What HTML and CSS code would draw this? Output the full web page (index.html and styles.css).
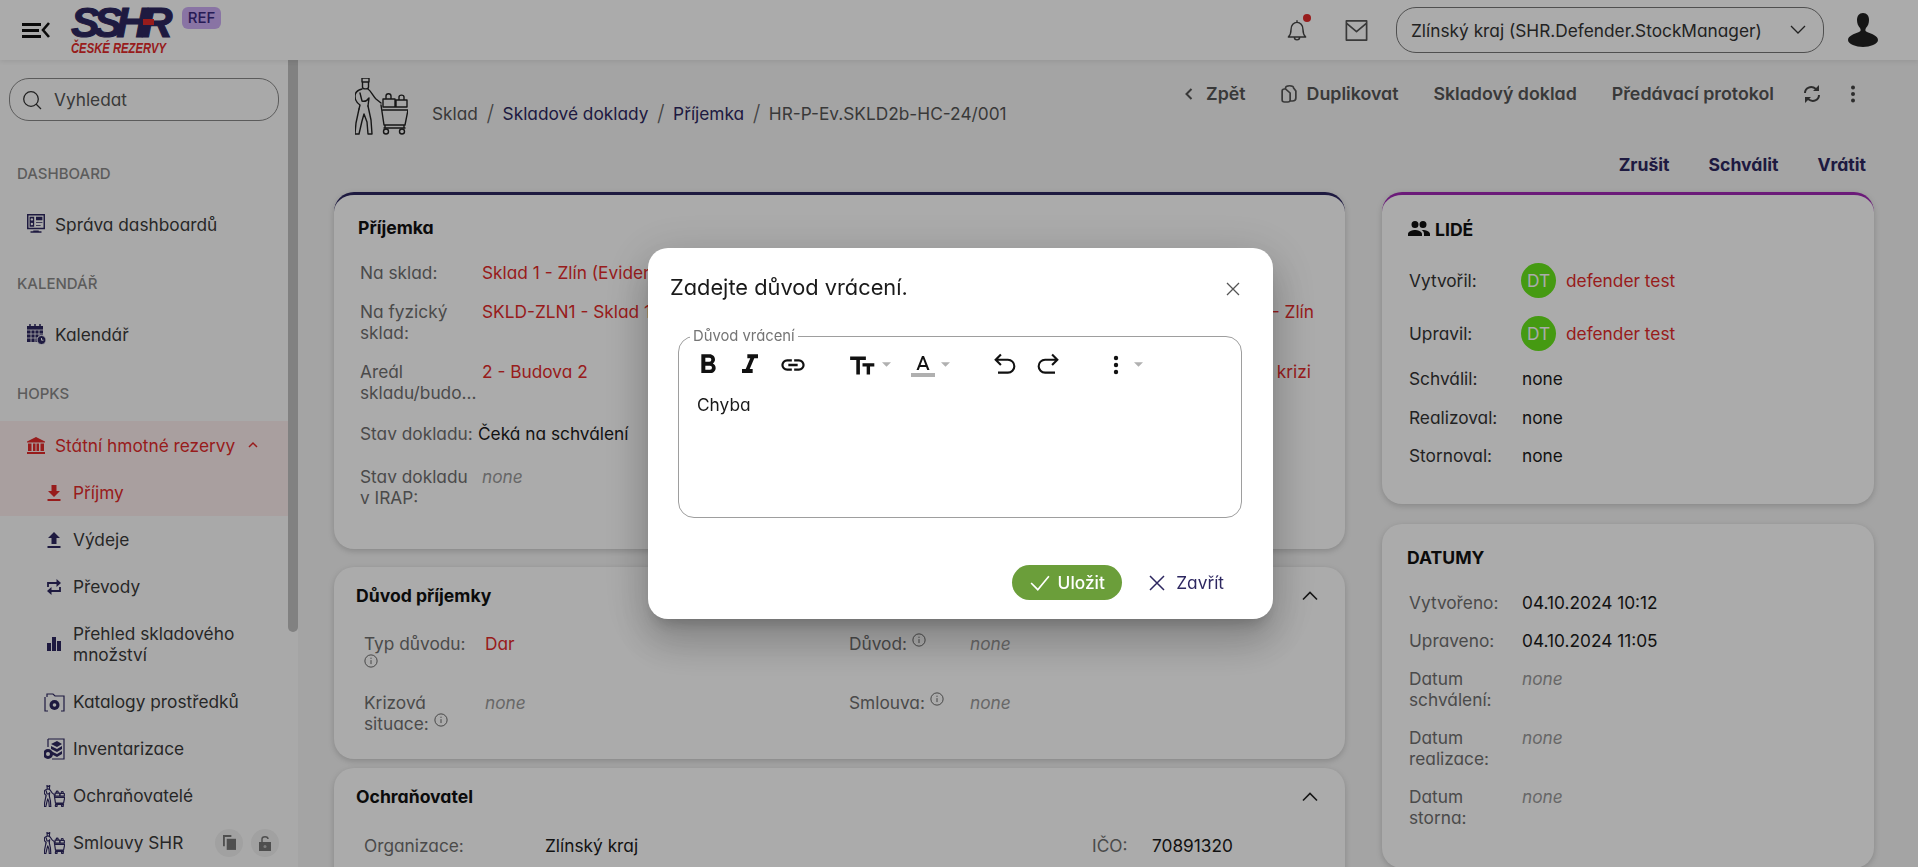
FILE: index.html
```html
<!DOCTYPE html>
<html lang="cs">
<head>
    <meta charset="UTF-8"/>
    <meta name="viewport" content="width=device-width, initial-scale=1.0"/>
    <title>Příjemka</title>
    <link rel="stylesheet" href="styles.css">
</head>
<body>
<svg class="defs" width="0" height="0">
    <symbol id="ic-info" viewBox="0 0 16 16"><circle cx="8" cy="8" r="7" fill="none" stroke="currentColor"/><path d="M8 7v4.5M8 4.2v1.4" stroke="currentColor" fill="none"/></symbol>
    <symbol id="ic-up" viewBox="0 0 24 24"><path d="M5 15.5l7-7 7 7" fill="none" stroke="currentColor" stroke-width="1.6"/></symbol>
    <symbol id="ic-caret" viewBox="0 0 10 6"><path d="M0 0h10L5 5z" fill="currentColor"/></symbol>
    <symbol id="ic-worker" viewBox="0 0 53 57">
        <g fill="none" stroke="currentColor" stroke-linejoin="round" stroke-linecap="round">
            <path d="M7 0h7v4H7zM7.500 4v5c0 2.500 6 2.500 6 0V4"/>
            <path d="M7 11c-4 1-7 3-7 7 0 4 2 7 5 9l-1 4M13 11c3 2 5 7 8 10l5 4M5 15l2 8c3 1 5 0 7-3M14 20l-1 8"/>
            <path d="M4 31L1 45 0 56h4l3-13 2-7 3 8 1 12h4L16 42 13 28"/>
            <path d="M26 27l3 20h21l3-15H28M29 50h21M30 47v3M49 47v3"/>
            <circle cx="31" cy="53.500" r="2.500"/><circle cx="47" cy="53.500" r="2.500"/>
            <path d="M28 21h12v8H28zM31 21v-3c0-3 5-3 5 0v3M41 22h11v7H41zM44 22v-3c0-2.500 5-2.500 5 0v3"/>
        </g>
    </symbol>
</svg>

<header class="topbar">
    <svg class="menu-toggle" viewBox="0 0 28 18"><path d="M0 2h19v3H0zM0 8h17v3H0zM0 14h19v3H0z" fill="#111"/><path d="M27 2l-6 7 6 7" fill="none" stroke="#111" stroke-width="2.6"/></svg>
    <div class="logo">
        <span class="logo-name">SSHR<i class="logo-dash"></i></span>
        <span class="logo-sub">ČESKÉ REZERVY</span>
    </div>
    <span class="env-badge">REF</span>

    <div class="topbar-right">
        <span class="bell">
            <svg viewBox="0 0 24 24" width="26" height="26"><path d="M4 18.500c2-2 2.500-3 2.500-7 0-4 2.500-6.500 5.500-6.500s5.500 2.500 5.500 6.500c0 4 .5 5 2.500 7zM9.500 18.500c0 3.500 5 3.500 5 0M12 5V3" fill="none" stroke="#444" stroke-width="1.300" stroke-linejoin="round"/></svg>
            <i class="bell-dot"></i>
        </span>
        <svg class="mail" viewBox="0 0 24 24" width="27" height="27"><path d="M3 3.500h18v17H3zM3 5.500l9 7.500 9-7.500" fill="none" stroke="#555" stroke-width="1.500" stroke-linejoin="round"/></svg>
        <div class="role-select">
            <span>Zlínský kraj (SHR.Defender.StockManager)</span>
            <svg viewBox="0 0 16 10" width="16" height="10"><path d="M1 1l7 7 7-7" fill="none" stroke="#333" stroke-width="1.300"/></svg>
        </div>
        <svg class="avatar-icon" viewBox="0 0 30 34" width="30" height="34"><path d="M15 0c4 0 6 3 6 7 0 3-1 6-3 8-1 2-1 3 1 4 5 2 11 4 11 8 0 4-8 7-15 7S0 31 0 27c0-4 6-6 11-8 2-1 2-2 1-4-2-2-3-5-3-8 0-4 2-7 6-7z" fill="#222"/></svg>
    </div>
</header>

<div class="layout">
    <aside class="sidebar">
        <div class="sidebar-inner">
            <div class="search">
                <svg viewBox="0 0 20 20" width="20" height="20"><circle cx="9" cy="9" r="7.300" fill="none" stroke="#333" stroke-width="1.300"/><path d="M14 14l5 5" stroke="#333" stroke-width="1.300"/></svg>
                <span>Vyhledat</span>
            </div>

            <div class="nav-title">DASHBOARD</div>
            <div class="nav-item">
                <svg class="nav-icon" viewBox="0 0 20 24"><path d="M1 2h18v15H1z" fill="none" stroke="currentColor" stroke-width="1.600"/><path d="M3 4h5v11H3zM10 4h7v4h-7zM10 10h7v1h-7zM10 13h5v1h-5zM7 19h6v1h3v1.500H4V20h3z" fill="currentColor"/><circle cx="5.500" cy="7" r="1.300" fill="#fff"/><circle cx="5.500" cy="12" r="1.300" fill="#fff"/></svg>
                <span>Správa dashboardů</span>
            </div>

            <div class="nav-title">KALENDÁŘ</div>
            <div class="nav-item">
                <svg class="nav-icon" viewBox="0 0 20 22"><path d="M1 3h16v16H1z" fill="currentColor"/><path d="M1 7h16M5 7v12M9 7v12M13 7v12M1 11h16M1 15h16" stroke="#fff" stroke-width=".8"/><path d="M4 1v3M9 1v3M14 1v3" stroke="currentColor" stroke-width="1.500"/><circle cx="15.500" cy="17" r="4.500" fill="currentColor" stroke="#fff"/><path d="M15.500 15v2.200h2" stroke="#fff" fill="none"/></svg>
                <span>Kalendář</span>
            </div>

            <div class="nav-title">HOPKS</div>
            <div class="nav-active">
                <div class="nav-item is-active">
                    <svg class="nav-icon" viewBox="0 0 20 18"><path d="M10 1l9 4.500v1H1v-1zM1 16h18v2H1z" fill="currentColor"/><path d="M2 7.500h3.500V15H2zM7 7.500h2.500V15H7zM10.500 7.500H13V15h-2.500zM14.500 7.500H18V15h-3.500z" fill="currentColor"/></svg>
                    <span>Státní hmotné rezervy</span>
                    <svg class="nav-chevron" viewBox="0 0 12 8" width="12" height="8"><path d="M2 6l4-4 4 4" fill="none" stroke="currentColor" stroke-width="1.500"/></svg>
                </div>
                <div class="nav-sub is-active">
                    <svg class="sub-icon" viewBox="0 0 14 16"><path d="M4.500 0h5v6H13L7 12 1 6h3.500zM.5 14h13v2H.5z" fill="currentColor"/></svg>
                    <span>Příjmy</span>
                </div>
            </div>
            <div class="nav-sub">
                <svg class="sub-icon" viewBox="0 0 14 16"><path d="M4.500 12h5V6H13L7 0 1 6h3.500zM.5 14h13v2H.5z" fill="currentColor"/></svg>
                <span>Výdeje</span>
            </div>
            <div class="nav-sub">
                <svg class="sub-icon" viewBox="0 0 14 16"><path d="M1 8V4h9M1 8v-.5M13 8v4H4" fill="none" stroke="currentColor" stroke-width="1.800"/><path d="M9.500 0L14 4 9.500 8zM4.500 8L0 12l4.500 4z" fill="currentColor"/></svg>
                <span>Převody</span>
            </div>
            <div class="nav-sub">
                <svg class="sub-icon" viewBox="0 0 14 16"><path d="M0 7h4v8H0zM5 1h4v14H5zM10 5h4v10h-4z" fill="currentColor"/></svg>
                <span>Přehled skladového množství</span>
            </div>
            <div class="nav-sub">
                <svg class="sub-icon wide" viewBox="0 0 21 20"><path d="M3 5V2h6l2 2h9v3M1 5v14h3M20 7v12h-3" fill="none" stroke="currentColor" stroke-width="1.200"/><circle cx="10.500" cy="13" r="5" fill="currentColor"/><circle cx="10.500" cy="13" r="1.800" fill="#fff"/></svg>
                <span>Katalogy prostředků</span>
            </div>
            <div class="nav-sub">
                <svg class="sub-icon wide" viewBox="0 0 21 22"><path d="M4 1h16v20H8M4 1v8" fill="none" stroke="currentColor" stroke-width="1.200"/><path d="M7 6l6-3 5 3-5 3zM7 8v3l6 3 5-3V8l-5 3zM7 13v3l6 3 5-3v-3l-5 3z" fill="currentColor"/><circle cx="4" cy="16" r="3.500" fill="none" stroke="currentColor"/></svg>
                <span>Inventarizace</span>
            </div>
            <div class="nav-sub">
                <svg class="sub-icon wide"><use href="#ic-worker"/></svg>
                <span>Ochraňovatelé</span>
            </div>
            <div class="nav-sub">
                <svg class="sub-icon wide"><use href="#ic-worker"/></svg>
                <span>Smlouvy SHR</span>
                <span class="sub-tools">
                    <span class="tool"><svg viewBox="0 0 14 16" width="13" height="15"><path d="M0 0h9v2H2v10H0z" fill="#777"/><path d="M4 4h10v12H4z" fill="#777"/></svg></span>
                    <span class="tool"><svg viewBox="0 0 12 16" width="12" height="16"><path d="M3 7V4c0-3 6-3 6 0" fill="none" stroke="#777" stroke-width="1.500"/><path d="M0 7h12v9H0z" fill="#777"/><circle cx="6" cy="11.500" r="1.500" fill="#bbb"/></svg></span>
                </span>
            </div>
        </div>
        <div class="sidebar-thumb"></div>
    </aside>

    <main class="main">
        <div class="page-top">
            <div class="crumbs">
                <svg class="crumb-icon"><use href="#ic-worker"/></svg>
                <span class="crumb muted">Sklad</span><span class="crumb-sep">/</span>
                <span class="crumb">Skladové doklady</span><span class="crumb-sep">/</span>
                <span class="crumb">Příjemka</span><span class="crumb-sep">/</span>
                <span class="crumb muted">HR-P-Ev.SKLD2b-HC-24/001</span>
            </div>
            <div class="actions">
                <span class="action back"><svg viewBox="0 0 8 12" width="8" height="12"><path d="M6.500 1L1.500 6l5 5" fill="none" stroke="currentColor" stroke-width="2"/></svg>Zpět</span>
                <span class="action dup"><svg viewBox="0 0 14 18" width="16" height="18" preserveAspectRatio="none"><path d="M4 4V3c0-3 7-3 7 0l2 3v7c0 2-1 3-3 3H8M4 4H3C1 4 1 5 1 6v9c0 2 1 2 2 2h3c2 0 2-1 2-2V8z" fill="none" stroke="currentColor" stroke-width="1.500"/></svg>Duplikovat</span>
                <span class="action">Skladový doklad</span>
                <span class="action action-last">Předávací protokol</span>
                <svg class="action-icon" viewBox="0 0 18 20" width="18" height="20"><path d="M2 9c0-5 6-8 11-4M16 11c0 5-6 8-11 4" fill="none" stroke="#444" stroke-width="2"/><path d="M16 1v6h-6zM2 19v-6h6z" fill="#444"/></svg>
                <svg class="action-icon" viewBox="0 0 4 18" width="4" height="18"><circle cx="2" cy="2.500" r="2" fill="#444"/><circle cx="2" cy="9" r="2" fill="#444"/><circle cx="2" cy="15.500" r="2" fill="#444"/></svg>
            </div>
        </div>
        <div class="state-actions">
            <span>Zrušit</span><span>Schválit</span><span>Vrátit</span>
        </div>

        <div class="columns">
            <div class="col-left">
                <section class="card card-navy card-receipt">
                    <h2>Příjemka</h2>
                    <div class="rows">
                        <div class="row"><span class="label">Na sklad:</span><span class="link">Sklad 1 - Zlín (Evidence)</span></div>
                        <div class="row"><span class="label">Na fyzický sklad:</span><span class="link">SKLD-ZLN1 - Sklad 1</span><span class="link">Sklad 1 - Zlín</span></div>
                        <div class="row"><span class="label">Areál skladu/budo...</span><span class="link">2 - Budova 2</span><span class="link inset">Použití v krizi</span></div>
                        <div class="row row-state"><span class="label">Stav dokladu:</span><span>Čeká na schválení</span></div>
                        <div class="row"><span class="label">Stav dokladu v&nbsp;IRAP:</span><span class="none">none</span></div>
                    </div>
                </section>

                <section class="card card-fold card-reason">
                    <div class="fold-head"><h2>Důvod příjemky</h2><svg width="24" height="24"><use href="#ic-up"/></svg></div>
                    <div class="pair-grid pair-reason">
                        <div class="pair"><span class="label">Typ důvodu: <svg class="info"><use href="#ic-info"/></svg></span><span class="link">Dar</span></div>
                        <div class="pair"><span class="label">Důvod: <svg class="info"><use href="#ic-info"/></svg></span><span class="none">none</span></div>
                        <div class="pair"><span class="label">Krizová situace: <svg class="info"><use href="#ic-info"/></svg></span><span class="none">none</span></div>
                        <div class="pair"><span class="label">Smlouva: <svg class="info"><use href="#ic-info"/></svg></span><span class="none">none</span></div>
                    </div>
                </section>

                <section class="card card-fold card-keeper">
                    <div class="fold-head"><h2>Ochraňovatel</h2><svg width="24" height="24"><use href="#ic-up"/></svg></div>
                    <div class="pair-grid pair-keeper">
                        <div class="pair"><span class="label">Organizace:</span><span>Zlínský kraj</span></div>
                        <div class="pair"><span class="label">IČO:</span><span>70891320</span></div>
                    </div>
                </section>
            </div>

            <div class="col-right">
                <section class="card card-purple card-people">
                    <h2 class="people-title"><svg viewBox="0 0 24 24" width="24" height="24"><path d="M16 13c-.4 0-.8 0-1.300.1 1.200.8 2.300 2 2.300 3.900v2h6v-2c0-2.700-4.700-4-7-4zM8 13c-2.300 0-7 1.300-7 4v2h14v-2c0-2.700-4.700-4-7-4zM8 11a3.500 3.500 0 1 0 0-7 3.500 3.500 0 0 0 0 7zM16 11a3.500 3.500 0 1 0 0-7 3.500 3.500 0 0 0 0 7z" fill="#111"/></svg>LIDÉ</h2>
                    <div class="side-rows">
                        <div class="side-row dark"><span class="label">Vytvořil:</span><span class="person"><i class="initials">DT</i><span class="link">defender test</span></span></div>
                        <div class="side-row dark"><span class="label">Upravil:</span><span class="person"><i class="initials">DT</i><span class="link">defender test</span></span></div>
                        <div class="side-row dark"><span class="label">Schválil:</span><span>none</span></div>
                        <div class="side-row dark"><span class="label">Realizoval:</span><span>none</span></div>
                        <div class="side-row dark"><span class="label">Stornoval:</span><span>none</span></div>
                    </div>
                </section>

                <section class="card card-dates">
                    <h2>DATUMY</h2>
                    <div class="side-rows">
                        <div class="side-row"><span class="label">Vytvořeno:</span><span>04.10.2024 10:12</span></div>
                        <div class="side-row"><span class="label">Upraveno:</span><span>04.10.2024 11:05</span></div>
                        <div class="side-row"><span class="label">Datum schválení:</span><span class="none">none</span></div>
                        <div class="side-row"><span class="label">Datum realizace:</span><span class="none">none</span></div>
                        <div class="side-row"><span class="label">Datum storna:</span><span class="none">none</span></div>
                    </div>
                </section>
            </div>
        </div>
    </main>
</div>

<div class="overlay">
    <div class="dialog">
        <div class="dialog-head">
            <span class="dialog-title">Zadejte důvod vrácení.</span>
            <svg viewBox="0 0 16 16" width="16" height="16"><path d="M2 2l12 12M14 2L2 14" stroke="#555" stroke-width="1.300"/></svg>
        </div>
        <fieldset class="editor">
            <legend>Důvod vrácení</legend>
            <div class="toolbar">
                <svg class="tb tb-b" viewBox="0 0 24 24"><path d="M13.500 15.500H10v-3h3.500a1.500 1.500 0 0 1 0 3zM10 6.500h3a1.500 1.500 0 0 1 0 3h-3zM15.600 10.790c.97-.68 1.650-1.790 1.650-2.790 0-2.260-1.750-4-4-4H7v14h7.040c2.100 0 3.710-1.700 3.710-3.790 0-1.520-.86-2.820-2.150-3.420z"/></svg>
                <svg class="tb tb-i" viewBox="0 0 24 24"><path d="M10 4v3h2.210l-3.420 8H6v3h8v-3h-2.210l3.420-8H18V4z"/></svg>
                <svg class="tb tb-link" viewBox="0 0 24 24"><path d="M3.900 12c0-1.710 1.390-3.100 3.100-3.100h4V7H7a5 5 0 0 0 0 10h4v-1.900H7c-1.710 0-3.100-1.390-3.100-3.100zM8 13h8v-2H8zm9-6h-4v1.900h4c1.710 0 3.100 1.390 3.100 3.100s-1.390 3.100-3.100 3.100h-4V17h4a5 5 0 0 0 0-10z"/></svg>
                <svg class="tb tb-size" viewBox="0 0 24 24"><path d="M1 4v3h5.500v13h3.200V7H15V4zM22.500 10H12v2.800h3.700V20h3V12.800h3.800z"/></svg>
                <svg class="tb-caret caret-size"><use href="#ic-caret"/></svg>
                <svg class="tb tb-color" viewBox="0 0 24 24"><path d="M9.620 12L12 5.670 14.370 12M11 3L5.500 17h2.250l1.120-3h6.250l1.130 3h2.250L13 3z"/><path d="M0 20h24v4H0z" fill="#b0b0b0"/></svg>
                <svg class="tb-caret caret-color"><use href="#ic-caret"/></svg>
                <svg class="tb tb-undo" viewBox="0 0 24 24"><path d="M8.500 3L4 7.500 8.500 12M4.500 7.500h10a5.500 5.500 0 0 1 0 11H6" fill="none" stroke="#111" stroke-width="1.800"/></svg>
                <svg class="tb tb-redo" viewBox="0 0 24 24"><path d="M15.500 3L20 7.500 15.500 12M19.500 7.500h-10a5.500 5.500 0 0 0 0 11H18" fill="none" stroke="#111" stroke-width="1.800"/></svg>
                <svg class="tb tb-more" viewBox="0 0 24 24"><circle cx="12" cy="5" r="2.200"/><circle cx="12" cy="12" r="2.200"/><circle cx="12" cy="19" r="2.200"/></svg>
                <svg class="tb-caret caret-more"><use href="#ic-caret"/></svg>
            </div>
            <div class="editor-text">Chyba</div>
        </fieldset>
        <div class="dialog-foot">
            <span class="btn-save"><svg viewBox="0 0 18 16" width="20" height="18"><path d="M1 8l6 6L17 2" fill="none" stroke="#fff" stroke-width="1.500"/></svg>Uložit</span>
            <span class="btn-close"><svg viewBox="0 0 16 16" width="16" height="16"><path d="M1 1l14 14M15 1L1 15" stroke="#2d2760" stroke-width="1.500"/></svg>Zavřít</span>
        </div>
    </div>
</div>
</body>
</html>
```

FILE: styles.css
```css
html, body {
    height: 100%;
    margin: 0;
    padding: 0;
    overflow: hidden;
}

body {
    background-color: #f5f5f5;
    color: #1a1a1a;
    font-family: 'Inter', 'Liberation Sans', sans-serif;
    font-feature-settings: 'cv11' 1;
    font-size: 17.3px;
    line-height: 21px;
}

.defs {
    position: absolute;
}

h2 {
    margin: 0;
    font-size: 17.6px;
    line-height: 21px;
    font-weight: 700;
    color: #111;
}

/* top bar */
.topbar {
    height: 60px;
    background-color: #fff;
    display: flex;
    align-items: flex-start;
    padding: 0 40px 0 22px;
    box-sizing: border-box;
    box-shadow: 0 2px 5px rgba(0, 0, 0, 0.08);
    position: relative;
}

.menu-toggle {
    width: 28px;
    height: 18px;
    margin: 21px 21px 0 0;
}

.logo {
    width: 111px;
    display: flex;
    flex-direction: column;
    padding-top: 4px;
}

.logo-name {
    font-family: 'Liberation Sans', sans-serif;
    font-style: italic;
    font-weight: 700;
    font-size: 43px;
    line-height: 36px;
    letter-spacing: -6px;
    color: #2d2760;
    position: relative;
    -webkit-text-stroke: 1px #2d2760;
}

.logo-dash {
    position: absolute;
    left: 72px;
    top: 15px;
    width: 11px;
    height: 6px;
    background-color: #e32b2b;
}

.logo-sub {
    font-family: 'Liberation Sans', sans-serif;
    font-style: italic;
    font-weight: 700;
    font-size: 15px;
    line-height: 14px;
    color: #e32b2b;
    white-space: nowrap;
    transform: scaleX(0.75);
    transform-origin: left center;
    margin-top: 1px;
}

.env-badge {
    margin-top: 7px;
    width: 39px;
    height: 22px;
    border-radius: 6px;
    background-color: #cdaef5;
    color: #3b2a80;
    font-size: 15px;
    font-weight: 500;
    line-height: 22px;
    text-align: center;
}

.topbar-right {
    margin-left: auto;
    display: flex;
    align-items: center;
    height: 60px;
}

.bell {
    position: relative;
    display: flex;
    margin-right: 33px;
}

.bell-dot {
    position: absolute;
    top: -3px;
    right: -1px;
    width: 8px;
    height: 8px;
    border-radius: 50%;
    background-color: #e32b2b;
}

.mail {
    margin-right: 26px;
}

.role-select {
    width: 428px;
    height: 46px;
    box-sizing: border-box;
    border: 1px solid #777;
    border-radius: 20px;
    display: flex;
    align-items: center;
    justify-content: space-between;
    padding: 0 17px 0 14px;
    margin-right: 24px;
    color: #333;
}

/* sidebar */
.layout {
    display: flex;
    height: 807px;
}

.sidebar {
    width: 298px;
    flex-shrink: 0;
    display: flex;
    background-color: #fdfdfd;
    overflow: hidden;
}

.sidebar-inner {
    width: 288px;
    flex-shrink: 0;
    color: #3a3a3a;
}

.sidebar-thumb {
    width: 10px;
    height: 572px;
    background-color: #c0c0c0;
    border-radius: 0 0 5px 5px;
}

.search {
    margin: 18px 9px 0;
    height: 43px;
    box-sizing: border-box;
    border: 1px solid #888;
    border-radius: 20px;
    display: flex;
    align-items: center;
    gap: 12px;
    padding-left: 12px;
    color: #555;
}

.nav-title {
    margin: 26px 0 17px 17px;
    line-height: 20px;
    font-size: 15px;
    font-weight: 500;
    color: #8a8a8a;
}

.search + .nav-title {
    margin-top: 43px;
}

.nav-item + .nav-title {
    margin-top: 25px;
}

.nav-item {
    height: 48px;
    box-sizing: border-box;
    padding: 0 0 2px 26px;
    display: flex;
    align-items: center;
    gap: 9px;
}

.nav-icon {
    width: 20px;
    height: 22px;
    color: #2d2760;
}

.nav-active {
    background-color: #fceeee;
}

.nav-item.is-active {
    padding-bottom: 0;
}

.nav-item.is-active,
.nav-sub.is-active,
.nav-item.is-active .nav-icon,
.nav-sub.is-active .sub-icon {
    color: #e32b2b;
}

.nav-chevron {
    margin-left: 3px;
}

.nav-sub {
    display: flex;
    align-items: center;
    padding: 13px 0 13px 47px;
    gap: 12px;
}

.sub-icon {
    width: 14px;
    height: 16px;
    flex-shrink: 0;
    color: #2d2760;
}

.sub-icon.wide {
    width: 21px;
    height: 22px;
    margin: -1px -4px -1px -3px;
    stroke-width: 3;
}

.sub-tools {
    margin-left: auto;
    display: flex;
    gap: 8px;
    padding-right: 9px;
}

.tool {
    width: 28px;
    height: 28px;
    margin: -5px 0;
    border-radius: 50%;
    background-color: #f0f0f0;
    display: flex;
    align-items: center;
    justify-content: center;
}

/* page head */
.main {
    flex: 1;
    min-width: 0;
    padding: 0 44px 0 36px;
    overflow: hidden;
}

.page-top {
    height: 84px;
    display: flex;
    justify-content: space-between;
    align-items: flex-start;
}

.crumbs {
    display: flex;
    align-items: center;
    margin: 18px 0 0 21px;
    height: 57px;
    color: #2d2760;
    white-space: nowrap;
}

.crumb-icon {
    width: 53px;
    height: 57px;
    color: #222;
    margin-right: 24px;
    stroke-width: 1.4;
}

.crumb {
    margin-top: 14px;
}

.crumb.muted {
    color: #555;
}

.crumb-sep {
    margin: 14px 8.5px 0;
    font-size: 22px;
    color: #666;
    font-weight: 300;
}

.actions {
    display: flex;
    align-items: center;
    padding-top: 23px;
    font-size: 17.8px;
    font-weight: 600;
    color: #555;
}

.action {
    display: flex;
    align-items: center;
    margin-right: 35px;
    white-space: nowrap;
}

.action-last {
    margin-right: 29px;
}

.action svg {
    margin-right: 10px;
}

.back svg {
    margin-right: 13px;
}

.action-icon + .action-icon {
    margin: 0 19px 0 30px;
}

.state-actions {
    margin-top: 10px;
    height: 21px;
    margin-bottom: 17px;
    display: flex;
    justify-content: flex-end;
    gap: 39px;
    padding-right: 8px;
    font-size: 17.6px;
    font-weight: 700;
    color: #2d2760;
}

.columns {
    display: flex;
    gap: 37px;
    align-items: flex-start;
}

.col-left {
    width: 1011px;
    flex-shrink: 0;
    display: flex;
    flex-direction: column;
}

.col-right {
    width: 492px;
    flex-shrink: 0;
    display: flex;
    flex-direction: column;
    gap: 20px;
}

/* cards */
.card {
    background-color: #fff;
    border-radius: 20px;
    box-shadow: 0 2px 6px rgba(0, 0, 0, 0.18);
    box-sizing: border-box;
}

.card-navy {
    border-top: 3px solid #2d2760;
}

.card-purple {
    border-top: 3px solid #a028b5;
}

.label {
    color: #6f6f6f;
}

.link {
    color: #e32b2b;
}

.none {
    color: #9a9a9a;
    font-style: italic;
}

.card-receipt {
    height: 357px;
    padding: 22px 31px 0 24px;
}

.rows {
    margin: 24px 0 0 2px;
    display: flex;
    flex-direction: column;
    gap: 18px;
}

.row {
    display: grid;
    grid-template-columns: 122px 1fr auto;
}

.row-state {
    grid-template-columns: 118px 1fr;
    padding: 2px 0 4px;
    color: #1a1a1a;
}

.row-state .label {
    white-space: nowrap;
}

.inset {
    padding-right: 3px;
}

.card-fold {
    padding: 18px 23px 0 22px;
}

.card-reason {
    margin-top: 18px;
    height: 192px;
}

.card-keeper {
    margin-top: 9px;
    height: 200px;
}

.fold-head {
    display: flex;
    justify-content: space-between;
    align-items: center;
    height: 21px;
    color: #222;
}

.pair-grid {
    display: grid;
    row-gap: 17px;
    margin: 0 0 0 8px;
}

.pair-reason {
    margin-top: 27px;
    grid-template-columns: 485px 1fr;
}

.pair-keeper {
    margin-top: 28px;
    grid-template-columns: 728px 1fr;
}

.pair {
    display: grid;
    grid-template-columns: 121px 1fr;
    align-items: start;
}

.pair-reason .label {
    padding-right: 4px;
}

.pair-keeper .pair:first-child {
    grid-template-columns: 181px 1fr;
}

.pair-keeper .pair:last-child {
    grid-template-columns: 60px 1fr;
}

.info {
    width: 14px;
    height: 14px;
    color: #555;
    vertical-align: 3px;
}

.card-people {
    height: 312px;
    padding: 22px 25px 0;
}

.card-dates {
    height: 344px;
    padding: 23px 25px 0;
}

.people-title {
    display: flex;
    align-items: center;
    gap: 4px;
}

.side-rows {
    margin: 24px 0 0 2px;
    display: flex;
    flex-direction: column;
    gap: 17px;
}

.card-people .side-rows {
    margin-top: 22px;
    gap: 17.5px;
}

.side-row {
    display: grid;
    grid-template-columns: 113px 1fr;
    align-items: start;
}

.side-row .label {
    padding-right: 8px;
}

.side-row.dark .label {
    color: #333;
    align-self: center;
}

.person {
    display: flex;
    align-items: center;
    gap: 10px;
}

.initials {
    width: 35px;
    height: 35px;
    margin-left: -1px;
    border-radius: 50%;
    background-color: #67e61b;
    color: #fff;
    font-style: normal;
    line-height: 35px;
    text-align: center;
}

/* dialog */
.overlay {
    position: fixed;
    inset: 0;
    background-color: rgba(0, 0, 0, 0.33);
    display: flex;
    align-items: center;
    justify-content: center;
}

.dialog {
    width: 625px;
    height: 371px;
    margin-left: 3px;
    background-color: #fff;
    border-radius: 20px;
    box-sizing: border-box;
    padding: 0 30px;
    display: flex;
    flex-direction: column;
    box-shadow: 0 11px 15px -7px rgba(0, 0, 0, 0.2), 0 24px 38px 3px rgba(0, 0, 0, 0.14), 0 9px 46px 8px rgba(0, 0, 0, 0.12);
}

.dialog-head {
    height: 82px;
    display: flex;
    align-items: center;
    justify-content: space-between;
    margin-left: -8px;
    flex-shrink: 0;
    color: #1a1a1a;
}

.dialog-head svg {
    margin-right: 2px;
}

.dialog-title {
    font-size: 21.8px;
    margin-top: -3px;
}

.editor {
    margin: -1px 0 0;
    padding: 0;
    height: 189px;
    box-sizing: border-box;
    border: 1px solid #9e9e9e;
    border-radius: 16px;
    width: 564px;
    flex-shrink: 0;
}

.editor legend {
    margin-left: 11px;
    padding: 0 3px;
    font-size: 14.8px;
    line-height: 14px;
    color: #757575;
}

.toolbar {
    display: flex;
    align-items: center;
    height: 26px;
    margin-top: 9px;
    padding-left: 13px;
}

.tb {
    width: 24px;
    height: 24px;
    fill: #111;
    flex-shrink: 0;
}

.tb-b { width: 32px; height: 32px; }
.tb-i { width: 32px; height: 32px; margin-left: 10px; }
.tb-link { width: 28px; height: 28px; margin-left: 13px; }
.tb-size { width: 27px; height: 27px; margin-left: 42px; }
.tb-color { margin-left: 20px; }
.tb-undo { width: 28px; height: 28px; margin-left: 41px; }
.tb-redo { width: 28px; height: 28px; margin-left: 15px; }
.tb-more { margin-left: 42px; }

.tb-caret {
    width: 9px;
    height: 6px;
    color: #b0b0b0;
    flex-shrink: 0;
}

.caret-size { margin-left: 6px; }
.caret-color { margin-left: 6px; }
.caret-more { margin-left: 6px; }

.editor-text {
    padding: 16px 0 0 18px;
}

.dialog-foot {
    display: flex;
    align-items: center;
    justify-content: flex-end;
    margin-top: 47px;
    padding-right: 19px;
    gap: 27px;
}

.btn-save {
    width: 110px;
    height: 35px;
    border-radius: 18px;
    background-color: #6b9e3a;
    color: #fff;
    font-weight: 500;
    display: flex;
    align-items: center;
    justify-content: center;
    gap: 8px;
}

.btn-close {
    display: flex;
    align-items: center;
    gap: 11px;
    color: #2d2760;
}
```
